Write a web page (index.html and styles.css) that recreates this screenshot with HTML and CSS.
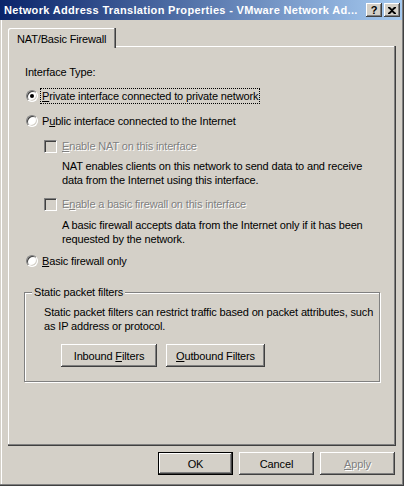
FILE: index.html
```html
<!DOCTYPE html>
<html>
<head>
<meta charset="utf-8">
<link rel="stylesheet" href="styles.css">
</head>
<body>
<div class="window">
  <div class="titlebar">
    <span class="title">Network Address Translation Properties - VMware Network Ad...</span>
    <span class="tbtn help">?</span>
    <span class="tbtn close"><svg width="8" height="7" viewBox="0 0 8 7"><path d="M0 0h2l2 2 2-2h2v1L5 3.5 8 6v1H6L4 5 2 7H0V6l3-2.5L0 1z" fill="#000"/></svg></span>
  </div>
  <div class="client">
    <div class="tabstrip">
      <div class="tab">NAT/Basic Firewall</div>
    </div>
    <div class="panel">
      <div class="row label-top">Interface Type:</div>
      <div class="row opt r1"><span class="radio checked"></span><span class="focus"><u>P</u>rivate interface connected to private network</span></div>
      <div class="row opt r2"><span class="radio"></span><span class="txt">P<u>u</u>blic interface connected to the Internet</span></div>
      <div class="row chk c1"><span class="check"></span><span class="disabled"><u>E</u>nable NAT on this interface</span></div>
      <div class="desc d1">NAT enables clients on this network to send data to and receive<br>data from the Internet using this interface.</div>
      <div class="row chk c2"><span class="check"></span><span class="disabled">E<u>n</u>able a basic firewall on this interface</span></div>
      <div class="desc d2">A basic firewall accepts data from the Internet only if it has been<br>requested by the network.</div>
      <div class="row opt r3"><span class="radio"></span><span class="txt"><u>B</u>asic firewall only</span></div>
      <div class="group">
        <span class="legend">Static packet filters</span>
        <div class="gtext">Static packet filters can restrict traffic based on packet attributes, such<br>as IP address or protocol.</div>
        <div class="gbtns">
          <div class="btn inbound"><span>Inbound <u>F</u>ilters</span></div>
          <div class="btn outbound"><span><u>O</u>utbound Filters</span></div>
        </div>
      </div>
    </div>
    <div class="dlgbtns">
      <div class="btn default"><span>OK</span></div>
      <div class="btn"><span>Cancel</span></div>
      <div class="btn dis"><span><u>A</u>pply</span></div>
    </div>
  </div>
</div>
</body>
</html>
```
FILE: styles.css
```css
html, body {
  margin: 0;
  padding: 0;
  background: #d4d0c8;
}
body {
  width: 404px;
  height: 486px;
  overflow: hidden;
  font-family: "Liberation Sans", Arial, sans-serif;
  font-size: 11px;
  letter-spacing: -0.15px;
  color: #000;
}
.window {
  width: 404px;
  height: 486px;
  box-sizing: border-box;
  background: #d4d0c8;
  box-shadow: inset -1px -1px #404040, inset -2px -2px #808080, inset 1px 1px #d4d0c8, inset 2px 2px #fff;
  display: flex;
  flex-direction: column;
}
.titlebar {
  height: 20px;
  margin-right: 2px;
  background: linear-gradient(to right, #0a246a, #a6caf0);
  display: flex;
  align-items: center;
  padding-left: 4px;
  padding-right: 2px;
}
.title {
  flex: 1;
  color: #fff;
  font-weight: bold;
  font-size: 11px;
  letter-spacing: 0.33px;
  white-space: nowrap;
  overflow: hidden;
}
.tbtn {
  width: 16px;
  height: 14px;
  box-sizing: border-box;
  background: #d4d0c8;
  box-shadow: inset -1px -1px #404040, inset 1px 1px #fff, inset -2px -2px #808080;
  display: flex;
  align-items: center;
  justify-content: center;
  font-weight: bold;
  font-size: 11px;
  line-height: 14px;
  letter-spacing: 0;
  flex: none;
}
.tbtn.help {
  margin-right: 2px;
}
.tbtn.close svg {
  display: block;
  margin-left: -1px;
}
.client {
  flex: 1;
  display: flex;
  flex-direction: column;
  padding: 8px 0 0 8px;
}
.tabstrip {
  display: flex;
  height: 19px;
  align-items: flex-end;
  position: relative;
  z-index: 1;
  margin-bottom: -1px;
}
.tab {
  width: 108px;
  height: 20px;
  box-sizing: border-box;
  background: #d4d0c8;
  box-shadow: inset -1px 0 #404040, inset -2px 0 #808080, inset 1px 1px #fff;
  border-top-left-radius: 2px;
  padding: 4px 0 0 9px;
  line-height: 14px;
  margin-bottom: -1px;
}
.panel {
  width: 388px;
  height: 400px;
  box-sizing: border-box;
  box-shadow: inset -1px -1px #404040, inset -2px -2px #808080, inset 1px 1px #fff;
  padding: 20px 0 0 17px;
  display: flex;
  flex-direction: column;
  align-items: flex-start;
}
.row {
  height: 14px;
  line-height: 14px;
  display: flex;
  align-items: center;
  white-space: nowrap;
}
.label-top {
  height: 13px;
  line-height: 13px;
}
.r1 { margin-top: 10px; }
.r2 { margin-top: 11px; }
.c1 { margin-top: 11px; }
.d1 { margin-top: 6px; }
.c2 { margin-top: 10px; }
.d2 { margin-top: 7px; }
.r3 { margin-top: 8px; }
.radio {
  width: 12px;
  height: 12px;
  box-sizing: border-box;
  border-radius: 50%;
  border: 1px solid;
  border-color: #808080 #fff #fff #808080;
  background: #fff;
  box-shadow: inset 1px 1px #404040, inset -1px -1px #d4d0c8;
  margin-left: 1px;
  margin-right: 4px;
  position: relative;
  flex: none;
}
.radio.checked::after {
  content: "";
  position: absolute;
  left: 3px;
  top: 3px;
  width: 4px;
  height: 4px;
  border-radius: 50%;
  background: #000;
}
.focus {
  outline: 1px dotted #000;
  padding: 0 1px;
  margin-left: -1px;
}
.chk {
  padding-left: 19px;
}
.check {
  width: 13px;
  height: 13px;
  box-sizing: border-box;
  border: 1px solid;
  border-color: #808080 #fff #fff #808080;
  box-shadow: inset 1px 1px #404040, inset -1px -1px #d4d0c8;
  background: #d4d0c8;
  margin-right: 5px;
  flex: none;
}
.disabled {
  color: #808080;
  text-shadow: 1px 1px #fff;
}
.desc {
  padding-left: 37px;
  line-height: 14px;
  white-space: nowrap;
}
.group {
  position: relative;
  margin-top: 24px;
  margin-left: -1px;
  width: 356px;
  height: 90px;
  box-sizing: border-box;
  border: 1px solid #808080;
  box-shadow: inset 1px 1px #fff, 1px 1px #fff;
  padding: 12px 0 0 19px;
}
.legend {
  position: absolute;
  left: 7px;
  top: -7px;
  padding: 0 2px;
  background: #d4d0c8;
  line-height: 13px;
}
.gtext {
  line-height: 14px;
  white-space: nowrap;
}
.gbtns {
  display: flex;
  gap: 9px;
  margin-top: 11px;
  padding-left: 17px;
}
.btn {
  height: 23px;
  box-sizing: border-box;
  background: #d4d0c8;
  box-shadow: inset -1px -1px #404040, inset 1px 1px #fff, inset -2px -2px #808080;
  display: flex;
  align-items: center;
  justify-content: center;
  width: 75px;
  line-height: 14px;
  white-space: nowrap;
}
.btn.inbound { width: 96px; }
.btn.outbound { width: 99px; }
.btn.default {
  box-shadow: inset 0 0 0 1px #000, inset -2px -2px #404040, inset 2px 2px #fff, inset -3px -3px #808080;
}
.btn.dis {
  color: #808080;
  text-shadow: 1px 1px #fff;
}
.dlgbtns {
  display: flex;
  justify-content: flex-end;
  gap: 6px;
  margin-top: 6px;
  padding-right: 9px;
}
```
